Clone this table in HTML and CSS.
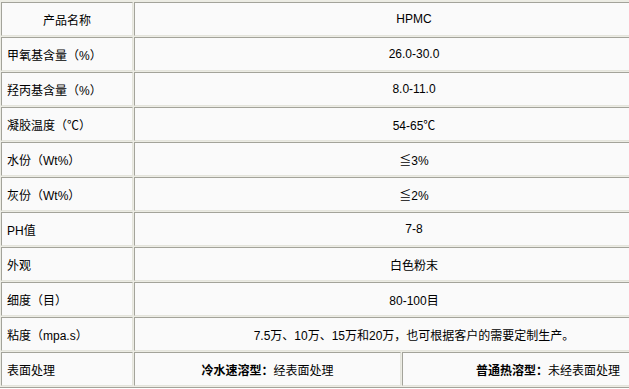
FILE: index.html
```html
<!DOCTYPE html>
<html lang="zh-CN">
<head>
<meta charset="utf-8">
<link rel="stylesheet" href="styles.css">
</head>
<body>
<table class="spec">
<colgroup><col class="c1"><col class="c2"><col class="c3"></colgroup>
<tr><td class="center">产品名称</td><td colspan="2" class="center">HPMC</td></tr>
<tr><td>甲氧基含量（%）</td><td colspan="2" class="center">26.0-30.0</td></tr>
<tr><td>羟丙基含量（%）</td><td colspan="2" class="center">8.0-11.0</td></tr>
<tr><td>凝胶温度（℃）</td><td colspan="2" class="center">54-65℃</td></tr>
<tr><td>水份（Wt%）</td><td colspan="2" class="center"><span class="sym">≦</span>3%</td></tr>
<tr><td>灰份（Wt%）</td><td colspan="2" class="center"><span class="sym">≦</span>2%</td></tr>
<tr><td>PH值</td><td colspan="2" class="center">7-8</td></tr>
<tr><td>外观</td><td colspan="2" class="center">白色粉末</td></tr>
<tr><td>细度（目）</td><td colspan="2" class="center">80-100目</td></tr>
<tr><td>粘度（mpa.s）</td><td colspan="2" class="center">7.5万、10万、15万和20万，也可根据客户的需要定制生产。</td></tr>
<tr><td>表面处理</td><td class="center"><b>冷水速溶型：</b>经表面处理</td><td class="center"><b>普通热溶型：</b>未经表面处理</td></tr>
</table>
</body>
</html>
```
FILE: styles.css
```css
html, body {
  margin: 0;
  padding: 0;
  background: #ffffff;
  overflow: hidden;
}
body {
  font-family: "Liberation Sans", "Noto Sans CJK SC", sans-serif;
  font-size: 12px;
  color: #000;
}
.spec {
  margin: 0 0 0 -1px;
  width: 697px;
  table-layout: fixed;
  border-collapse: separate;
  border-spacing: 1px;
  background: #ecece4;
  border: 1px solid;
  border-color: #ecece4 #a3a39a #a3a39a #ecece4;
}
.c1 { width: 132px; }
.c2 { width: 267px; }
.c3 { width: 292px; }
.spec td {
  box-sizing: border-box;
  height: 34px;
  padding: 0 5px;
  background: #fafafa;
  border: 1px solid;
  border-color: #a3a39a #e4e4dc #e4e4dc #a3a39a;
  vertical-align: middle;
  white-space: nowrap;
}
.spec td.center { text-align: center; }
.spec b { font-weight: bold; }
.sym { font-family: "Noto Sans CJK SC", sans-serif; }
```
